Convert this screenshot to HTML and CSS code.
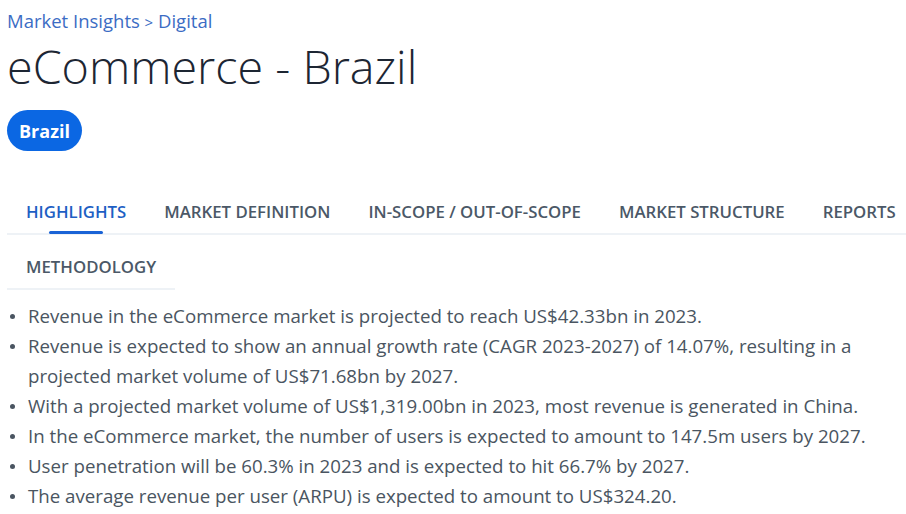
FILE: index.html
```html
<!DOCTYPE html>
<html lang="en">
<head>
<meta charset="utf-8">
<title>eCommerce - Brazil</title>
<link rel="stylesheet" href="styles.css">
</head>
<body>
<main class="page">
  <nav class="breadcrumb"><a href="#">Market Insights</a> <span class="sep">&gt;</span> <a href="#">Digital</a></nav>
  <h1 class="title">eCommerce - Brazil</h1>
  <div class="badges"><span class="badge">Brazil</span></div>
  <ul class="tabs">
    <li class="tab active">HIGHLIGHTS</li>
    <li class="tab">MARKET DEFINITION</li>
    <li class="tab">IN-SCOPE / OUT-OF-SCOPE</li>
    <li class="tab">MARKET STRUCTURE</li>
    <li class="tab">REPORTS</li>
    <li class="tab">METHODOLOGY</li>
  </ul>
  <ul class="highlights">
    <li>Revenue in the eCommerce market is projected to reach US$42.33bn in 2023.</li>
    <li>Revenue is expected to show an annual growth rate (CAGR 2023-2027) of 14.07%, resulting in a projected market volume of US$71.68bn by 2027.</li>
    <li>With a projected market volume of US$1,319.00bn in 2023, most revenue is generated in China.</li>
    <li>In the eCommerce market, the number of users is expected to amount to 147.5m users by 2027.</li>
    <li>User penetration will be 60.3% in 2023 and is expected to hit 66.7% by 2027.</li>
    <li>The average revenue per user (ARPU) is expected to amount to US$324.20.</li>
  </ul>
</main>
</body>
</html>
```
FILE: styles.css
```css
html, body {
  margin: 0;
  padding: 0;
  background: #ffffff;
  overflow: hidden;
}
body {
  font-family: "Open Sans", "Liberation Sans", sans-serif;
  color: #4a5561;
}
.page {
  padding: 8px 0 0 7px;
  width: 920px;
}
.breadcrumb {
  font-size: 18.5px;
  line-height: 26px;
  color: #3b6cc4;
}
.breadcrumb a {
  color: #3b6cc4;
  text-decoration: none;
}
.breadcrumb .sep {
  font-size: 15px;
}
.title {
  margin: 0;
  font-weight: 300;
  font-size: 46.7px;
  line-height: 62px;
  color: #1d2633;
}
.badges {
  margin-top: 13px;
  display: flex;
}
.badge {
  display: inline-flex;
  align-items: center;
  justify-content: center;
  height: 41px;
  padding: 0 12px;
  border-radius: 21px;
  background: #0b67e3;
  color: #ffffff;
  font-weight: 700;
  font-size: 18px;
}
.tabs {
  list-style: none;
  margin: 38px 0 0;
  padding: 0;
  display: flex;
  flex-wrap: wrap;
}
.tab {
  position: relative;
  height: 44px;
  padding: 0 19px;
  display: flex;
  align-items: center;
  font-size: 16.8px;
  font-weight: 600;
  color: #4b5867;
  border-bottom: 2px solid #eef2f6;
  margin-bottom: 9px;
  white-space: nowrap;
}
.tab:nth-child(5) {
  flex: 1;
}
.tab.active {
  color: #1e5fc4;
}
.tab.active::after {
  content: "";
  position: absolute;
  left: 50%;
  bottom: -1px;
  width: 54px;
  margin-left: -27px;
  height: 3px;
  border-radius: 2px;
  background: #1a63d6;
}
.highlights {
  list-style: none;
  margin: 2px 0 0;
  padding: 0 0 0 21px;
  width: 870px;
  font-size: 18.7px;
  line-height: 30px;
  color: #4a5561;
}
.highlights li {
  position: relative;
}
.highlights li::before {
  content: "";
  position: absolute;
  left: -18px;
  top: 13px;
  width: 5px;
  height: 5px;
  border-radius: 50%;
  background: #4a5561;
}
```
